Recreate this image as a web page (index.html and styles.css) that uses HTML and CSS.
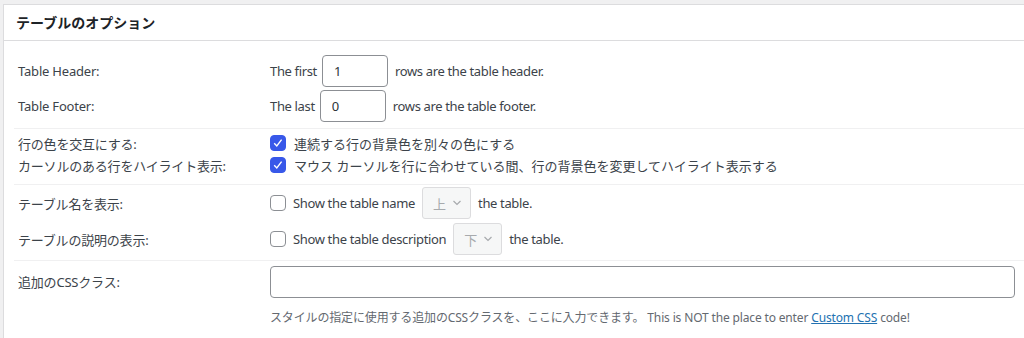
FILE: index.html
```html
<!DOCTYPE html>
<html>
<head>
  <meta charset="utf-8">
  <link rel="stylesheet" href="styles.css">
</head>
<body>
<div class="postbox">
  <h2 class="hndle">テーブルのオプション</h2>
  <div class="inside">
    <div class="group g1">
      <div class="row">
        <div class="label">Table Header:</div>
        <div class="field">The first <input class="num" type="text" value="1"> rows are the table header.</div>
      </div>
      <div class="row">
        <div class="label">Table Footer:</div>
        <div class="field">The last <input class="num" type="text" value="0"> rows are the table footer.</div>
      </div>
    </div>
    <div class="group g2">
      <div class="row">
        <div class="label">行の色を交互にする:</div>
        <div class="field"><span class="check on"><svg width="16" height="16" viewBox="0 0 16 16"><path d="M4.2 8.3 L6.8 10.9 L11.6 4.6" fill="none" stroke="#fff" stroke-width="1.4"/></svg></span> 連続する行の背景色を別々の色にする</div>
      </div>
      <div class="row">
        <div class="label">カーソルのある行をハイライト表示:</div>
        <div class="field"><span class="check on"><svg width="16" height="16" viewBox="0 0 16 16"><path d="M4.2 8.3 L6.8 10.9 L11.6 4.6" fill="none" stroke="#fff" stroke-width="1.4"/></svg></span> マウス カーソルを行に合わせている間、行の背景色を変更してハイライト表示する</div>
      </div>
    </div>
    <div class="group g3">
      <div class="row">
        <div class="label">テーブル名を表示:</div>
        <div class="field"><span class="check"></span> Show the table name <span class="select">上<svg width="10" height="6" viewBox="0 0 10 6"><path d="M1.5 1 L5 4.5 L8.5 1" fill="none" stroke="#a7aaad" stroke-width="1.2"/></svg></span> the table.</div>
      </div>
      <div class="row">
        <div class="label">テーブルの説明の表示:</div>
        <div class="field"><span class="check"></span> Show the table description <span class="select">下<svg width="10" height="6" viewBox="0 0 10 6"><path d="M1.5 1 L5 4.5 L8.5 1" fill="none" stroke="#a7aaad" stroke-width="1.2"/></svg></span> the table.</div>
      </div>
    </div>
    <div class="group g4">
      <div class="row top">
        <div class="label">追加のCSSクラス:</div>
        <div class="field col">
          <input class="wide" type="text" value="">
          <p class="description">スタイルの指定に使用する追加のCSSクラスを、ここに入力できます。 This is NOT the place to enter <a href="#">Custom CSS</a> code!</p>
        </div>
      </div>
    </div>
  </div>
</div>
</body>
</html>
```

FILE: styles.css
```css
html, body {
  margin: 0;
  background: #f0f0f1;
  color: #3c434a;
  font-family: "Noto Sans", "Noto Sans CJK JP", sans-serif;
  font-size: 13px;
  overflow: hidden;
}
.postbox {
  margin: 4px -20px 0 3px;
  background: #fff;
  border: 1px solid #dcdcde;
  height: 340px;
}
.hndle {
  margin: 0;
  padding: 0 12px;
  height: 35px;
  line-height: 34px;
  font-size: 14px;
  font-weight: 600;
  color: #1d2327;
  border-bottom: 1px solid #dcdcde;
  font-family: "Noto Sans CJK JP", sans-serif;
}
.inside {
  padding: 0 10px;
}
.group {
  display: flex;
  flex-direction: column;
}
.group + .group {
  border-top: 1px solid #f0f0f1;
}
.g1 {
  padding: 14px 0 6px;
  gap: 3px;
}
.g2 {
  padding: 3px 0 8px;
}
.g3 {
  padding: 2px 0 5px;
  gap: 4px;
}
.g4 {
  padding: 5px 0 0;
}
.row {
  display: flex;
  align-items: center;
  min-height: 22px;
}
.row.top {
  align-items: flex-start;
}
.label {
  width: 252px;
  padding-left: 4px;
  flex: none;
  color: #3c434a;
  letter-spacing: -0.2px;
}
.row.top .label {
  padding-top: 6px;
}
.field {
  display: flex;
  align-items: center;
  gap: 5px;
  white-space: nowrap;
  letter-spacing: -0.35px;
}
.g2 .field {
  letter-spacing: 0;
  gap: 6px;
}
.field.col {
  flex-direction: column;
  align-items: stretch;
  flex: 1;
  margin-right: 18px;
  letter-spacing: 0;
}
.num {
  width: 66px;
  height: 32px;
  box-sizing: border-box;
  border: 1px solid #8c8f94;
  border-radius: 4px;
  padding: 0 11px;
  font-family: inherit;
  font-size: 13px;
  color: #2c3338;
  margin-right: 2px;
}
.wide {
  height: 32px;
  box-sizing: border-box;
  border: 1px solid #8c8f94;
  border-radius: 4px;
  width: 100%;
  margin: 0;
}
.check {
  width: 16px;
  height: 16px;
  box-sizing: border-box;
  border: 1px solid #8c8f94;
  border-radius: 4px;
  display: inline-block;
  margin-right: 2px;
}
.check.on {
  background: #3858e9;
  border-color: #3858e9;
}
.check svg {
  display: block;
  margin: -1px;
}
.select {
  display: inline-flex;
  align-items: center;
  gap: 6px;
  height: 32px;
  box-sizing: border-box;
  padding: 0 8px 0 10px;
  border: 1px solid #dcdcde;
  border-radius: 3px;
  background: #f6f7f7;
  color: #a7aaad;
  margin: 0 2px;
  letter-spacing: 0;
}
.description {
  margin: 5px 0 0;
  font-size: 12px;
  color: #646970;
  letter-spacing: -0.15px;
}
.description a {
  color: #2271b1;
}
```
